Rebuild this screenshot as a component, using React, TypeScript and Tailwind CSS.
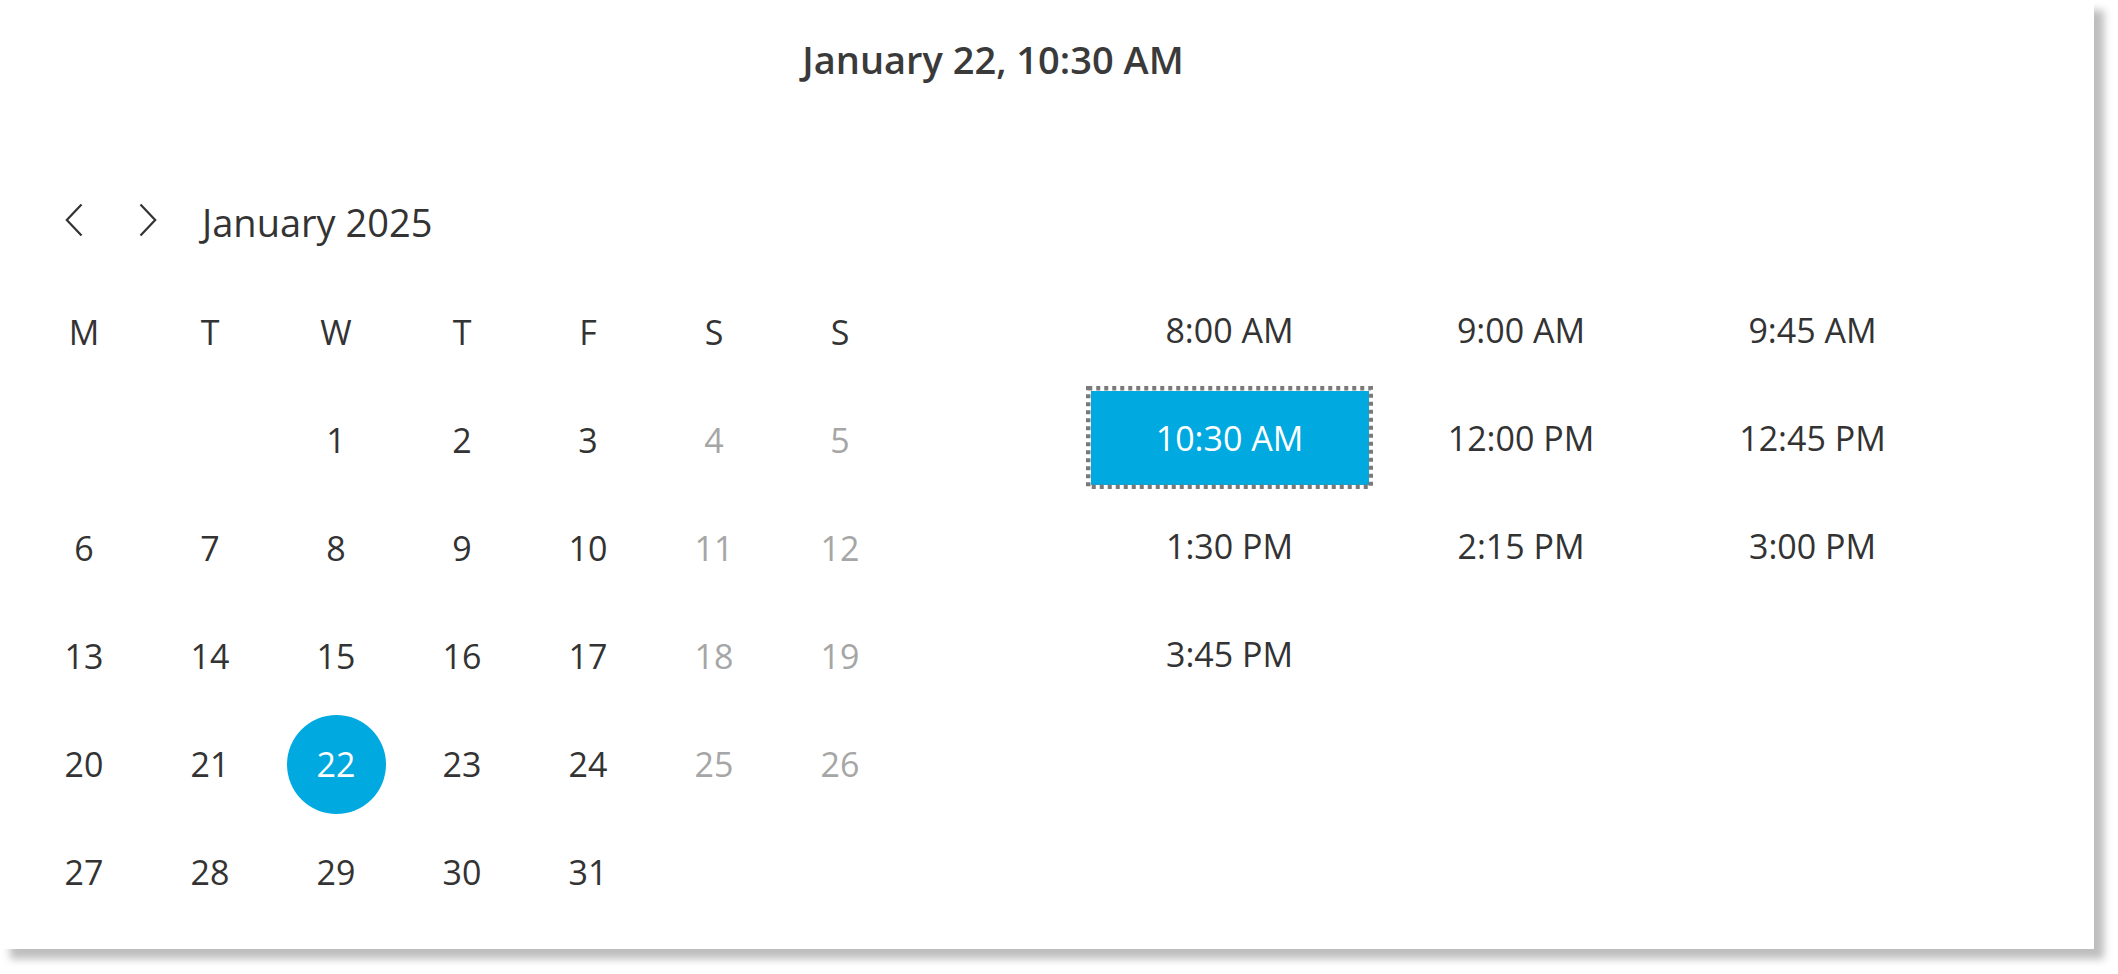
import React from 'react';

const WEEKDAYS = ['M', 'T', 'W', 'T', 'F', 'S', 'S'];
const TIMES = ['8:00 AM', '9:00 AM', '9:45 AM', '10:30 AM', '12:00 PM', '12:45 PM', '1:30 PM', '2:15 PM', '3:00 PM', '3:45 PM'];

// January 2025 starts on a Wednesday (Monday-first grid => 2 blanks)
const buildDays = () => {
  const cells: (number | null)[] = [null, null];
  for (let d = 1; d <= 31; d++) cells.push(d);
  return cells;
};

const Chevron: React.FC<{ dir: 'left' | 'right' }> = ({ dir }) => (
  <svg width="18" height="34" viewBox="0 0 18 34" className="mb-[4px] shrink-0">
    <polyline
      points={dir === 'left' ? '16.5,1.5 1.8,17 16.5,32.5' : '1.5,1.5 16.2,17 1.5,32.5'}
      fill="none"
      stroke="#333333"
      strokeWidth="2.2"
    />
  </svg>
);

const App: React.FC = () => {
  const days = buildDays();
  const selectedDay = 22;
  const selectedTime = '10:30 AM';

  return (
    <div className="bg-white w-[2118px] h-[974px] font-['Open_Sans',sans-serif] text-[#333333]">
      <div className="w-[2094px] h-[949px] bg-white shadow-[10px_10px_8px_rgba(0,0,0,0.26)] flex flex-col pt-[33px]">
        {/* Title */}
        <div className="w-[1986px] h-[52px] flex items-center justify-center text-[38px] leading-[52px] font-[550] text-[#3a3a3a]">
          January 22, 10:30 AM
        </div>

        {/* Month navigation */}
        <div className="mt-[111px] h-[52px] flex items-center pl-[65px]">
          <button className="flex items-center">
            <Chevron dir="left" />
          </button>
          <button className="flex items-center ml-[56px]">
            <Chevron dir="right" />
          </button>
          <span className="ml-[45px] text-[38px] leading-[52px]">January 2025</span>
        </div>

        {/* Calendar and times */}
        <div className="mt-[30px] flex pl-[21px]">
          <div className="w-[882px] grid grid-cols-7 auto-rows-[108px] text-[34px] leading-[46px]">
            {WEEKDAYS.map((w, i) => (
              <div key={'w' + i} className="flex items-center justify-center">
                {w}
              </div>
            ))}
            {days.map((d, i) => {
              const weekend = i % 7 >= 5;
              if (d === null) return <div key={'e' + i} />;
              return (
                <div key={'d' + i} className="flex items-center justify-center">
                  {d === selectedDay ? (
                    <span className="w-[99px] h-[99px] rounded-full bg-[#00a9e0] text-white flex items-center justify-center">
                      {d}
                    </span>
                  ) : (
                    <span className={weekend ? 'text-[#a6a6a6]' : ''}>{d}</span>
                  )}
                </div>
              );
            })}
          </div>

          <div className="ml-[183px] grid grid-cols-[repeat(3,287px)] auto-rows-[103px] gap-x-[4.5px] gap-y-[5px] text-[34px] leading-[46px]">
            {TIMES.map((t) =>
              t === selectedTime ? (
                <div key={t} className="relative bg-white p-[4.5px]">
                  <div className="w-full h-full bg-[#00a9e0] text-white flex items-center justify-center">{t}</div>
                  <svg className="absolute inset-0 pointer-events-none" width="287" height="103">
                    <rect
                      x="2.25"
                      y="2.25"
                      width="282.5"
                      height="98.5"
                      fill="none"
                      stroke="#7a7a7a"
                      strokeWidth="4.5"
                      strokeDasharray="4 4"
                    />
                  </svg>
                </div>
              ) : (
                <div key={t} className="flex items-center justify-center">
                  {t}
                </div>
              )
            )}
          </div>
        </div>
      </div>
    </div>
  );
};

export default App;
